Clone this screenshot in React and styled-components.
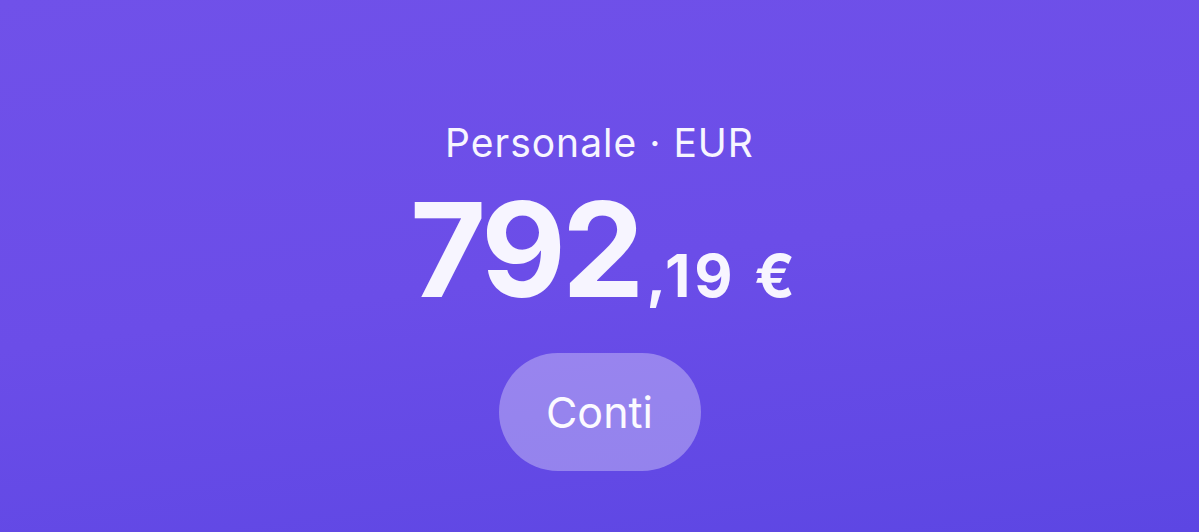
import React from "react";
import styled, { createGlobalStyle } from "styled-components";

const Global = createGlobalStyle`
  html, body { margin: 0; padding: 0; height: 100%; }
  body { font-family: Inter, "Noto Sans", sans-serif; -webkit-font-smoothing: antialiased; }
  #root { height: 100%; }
`;

const Screen = styled.div`
  width: 1199px;
  height: 532px;
  background: linear-gradient(172deg, #7051e9 0%, #6b4de8 50%, #5c46e3 100%);
  display: flex;
  flex-direction: column;
  align-items: center;
  padding-top: 118px;
  box-sizing: border-box;
  color: #f7f5ff;
  overflow: hidden;
`;

const Label = styled.div`
  font-size: 39px;
  font-weight: 400;
  letter-spacing: 1px;
  line-height: 50px;
`;

const Amount = styled.div`
  display: flex;
  align-items: baseline;
  margin-top: 16px;
  margin-left: 6px;
  line-height: 1;
  font-weight: 700;
`;

const Whole = styled.span`
  font-size: 131px;
  letter-spacing: -4px;
`;

const Fraction = styled.span`
  font-size: 59px;
  letter-spacing: 4px;
  margin-left: 6px;
  margin-right: -4px;
`;

const Pill = styled.button`
  margin-top: 38px;
  width: 202px;
  height: 118px;
  border: none;
  border-radius: 59px;
  background: rgba(255, 255, 255, 0.32);
  color: #fbfaff;
  font-family: Inter, "Noto Sans", sans-serif;
  font-size: 43px;
  font-weight: 400;
  display: flex;
  align-items: center;
  justify-content: center;
  padding: 0;
`;

export default function App() {
  return (
    <>
      <Global />
      <Screen>
        <Label>Personale · EUR</Label>
        <Amount>
          <Whole>792</Whole>
          <Fraction>,19 €</Fraction>
        </Amount>
        <Pill>Conti</Pill>
      </Screen>
    </>
  );
}
